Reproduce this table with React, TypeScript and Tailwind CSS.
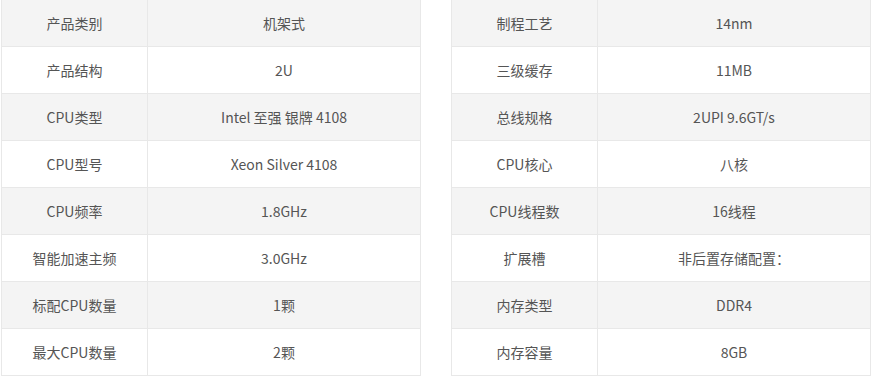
const left: [string, string][] = [
  ["产品类别", "机架式"],
  ["产品结构", "2U"],
  ["CPU类型", "Intel 至强 银牌 4108"],
  ["CPU型号", "Xeon Silver 4108"],
  ["CPU频率", "1.8GHz"],
  ["智能加速主频", "3.0GHz"],
  ["标配CPU数量", "1颗"],
  ["最大CPU数量", "2颗"],
]

const right: [string, string][] = [
  ["制程工艺", "14nm"],
  ["三级缓存", "11MB"],
  ["总线规格", "2UPI 9.6GT/s"],
  ["CPU核心", "八核"],
  ["CPU线程数", "16线程"],
  ["扩展槽", "非后置存储配置："],
  ["内存类型", "DDR4"],
  ["内存容量", "8GB"],
]

function SpecTable({ rows }: { rows: [string, string][] }) {
  return (
    <table className="w-[420px] border-collapse table-fixed">
      <tbody>
        {rows.map(([k, v], i) => (
          <tr key={k} className={i % 2 === 0 ? "bg-[#f4f4f4]" : "bg-white"}>
            <td className="w-[146px] h-[47px] border border-[#e8e8e8] text-center p-0">{k}</td>
            <td className="h-[47px] border border-[#e8e8e8] text-center p-0">{v}</td>
          </tr>
        ))}
      </tbody>
    </table>
  )
}

export default function App() {
  return (
    <div
      className="w-[874px] h-[378px] bg-white overflow-hidden text-[14px] text-[#555555]"
      style={{ fontFamily: '"Noto Sans CJK SC", "Open Sans", sans-serif' }}
    >
      <div className="flex gap-[30px] pl-[1px] -mt-[1px]">
        <SpecTable rows={left} />
        <SpecTable rows={right} />
      </div>
    </div>
  )
}
